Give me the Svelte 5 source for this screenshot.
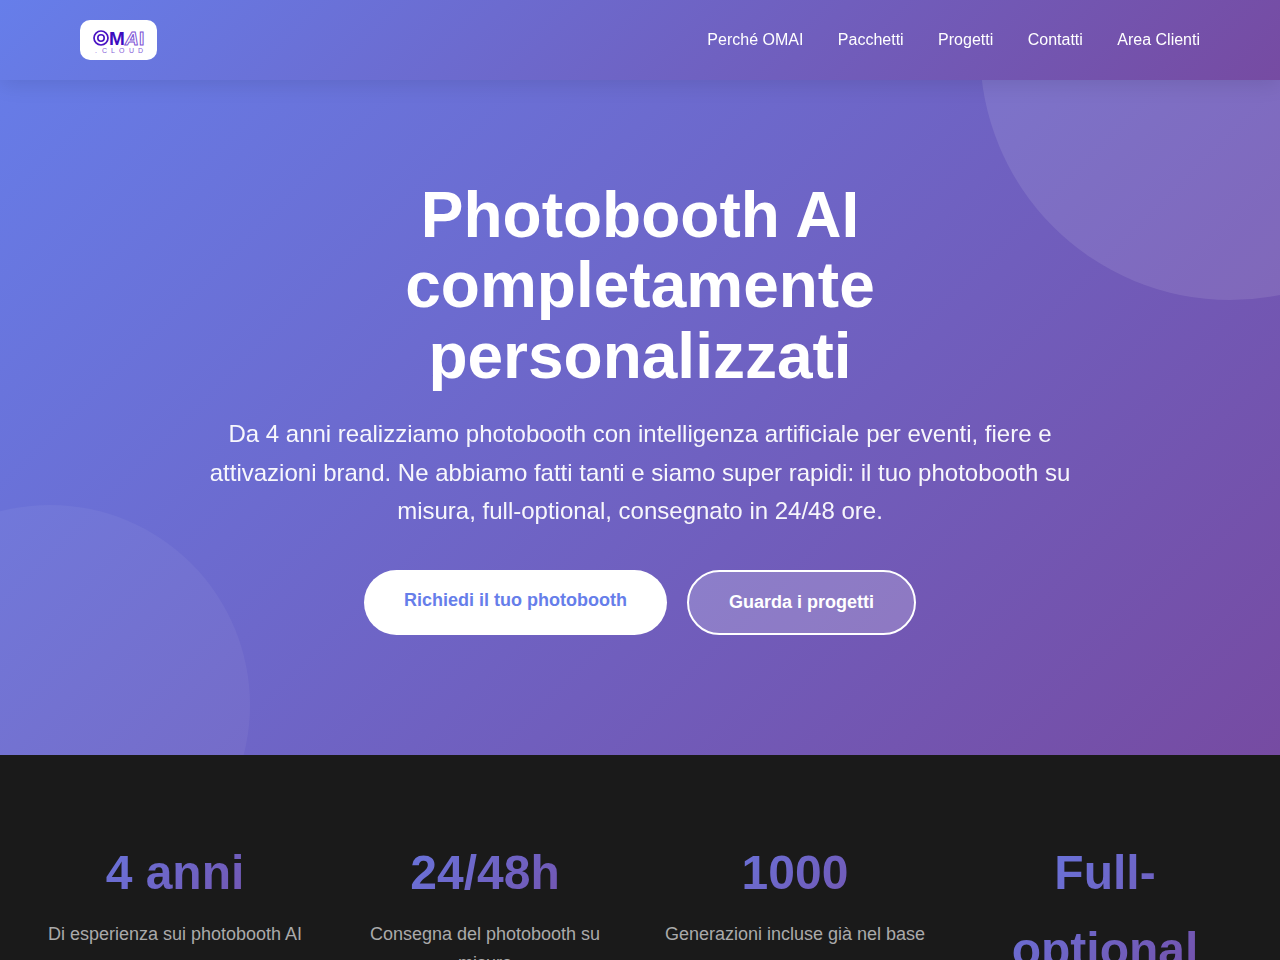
<script>
    const links = [
        { label: "Perché OMAI", href: "#perche" },
        { label: "Pacchetti", href: "#pacchetti" },
        { label: "Progetti", href: "#progetti" },
        { label: "Contatti", href: "#contatti" },
        { label: "Area Clienti", href: "#area-clienti" },
    ];

    const stats = [
        { value: "4 anni", label: "Di esperienza sui photobooth AI" },
        { value: "24/48h", label: "Consegna del photobooth su misura" },
        { value: "1000", label: "Generazioni incluse già nel base" },
        { value: "Full-optional", label: "" },
    ];
</script>

<header>
    <div class="header-inner">
        <a class="logo" href="#home" aria-label="OMAI.CLOUD">
            <svg viewBox="0 0 54 26" width="54" height="26" aria-hidden="true">
                <g fill="none" stroke="#4a12c4">
                    <circle cx="10" cy="11" r="7" stroke-width="1.7" />
                    <circle cx="10" cy="11" r="3.2" stroke-width="1.6" />
                </g>
                <text class="logo-solid" x="18" y="18">M</text>
                <text class="logo-outline slanted" x="34" y="18">A</text>
                <text class="logo-outline" x="48" y="18">I</text>
                <text class="logo-sub" x="4 11 20 28 38 47" y="26">.CLOUD</text>
            </svg>
        </a>
        <nav>
            {#each links as link}
                <a href={link.href}>{link.label}</a>{" "}
            {/each}
        </nav>
    </div>
</header>

<main>
    <section class="hero" id="home">
        <div class="hero-content">
            <h1>Photobooth AI completamente personalizzati</h1>
            <p>
                Da 4 anni realizziamo photobooth con intelligenza artificiale per eventi, fiere e
                attivazioni brand. Ne abbiamo fatti tanti e siamo super rapidi: il tuo photobooth
                su misura, full-optional, consegnato in 24/48 ore.
            </p>
            <div class="hero-buttons">
                <a class="btn btn-primary" href="#contatti">Richiedi il tuo photobooth</a>
                <a class="btn btn-secondary" href="#progetti">Guarda i progetti</a>
            </div>
        </div>
    </section>

    <section class="stats">
        <div class="stats-grid">
            {#each stats as stat}
                <div class="stat">
                    <div class="stat-value">{stat.value}</div>
                    {#if stat.label}
                        <div class="stat-label">{stat.label}</div>
                    {/if}
                </div>
            {/each}
        </div>
    </section>
</main>

<style>
    :global(body) {
        margin: 0;
        font-family: "Liberation Sans", Arial, sans-serif;
        line-height: 1.6;
        background: #1a1a1a;
    }

    header,
    main {
        --gradient: linear-gradient(135deg, #667eea 0%, #764ba2 100%);
    }

    header {
        position: fixed;
        top: 0;
        left: 0;
        right: 0;
        z-index: 10;
        background: var(--gradient);
        box-shadow: 0 4px 20px rgba(0, 0, 0, 0.1);
    }

    .header-inner {
        display: flex;
        justify-content: space-between;
        align-items: center;
        box-sizing: border-box;
        max-width: 1200px;
        margin: 0 auto;
        padding: 20px 40px;
    }

    .logo {
        display: flex;
        padding: 7px 12px 7px 11px;
        background: #fff;
        border-radius: 10px;
    }

    .logo-solid,
    .logo-outline {
        font-size: 19px;
        font-weight: 700;
    }

    .logo-solid {
        fill: #3c0cc0;
    }

    .logo-outline {
        fill: none;
        stroke: #7d52d6;
        stroke-width: 1px;
    }

    .slanted {
        font-style: italic;
    }

    .logo-sub {
        fill: #8560d8;
        font-size: 7px;
    }

    nav a {
        margin-left: 30px;
        color: #fff;
        font-size: 16px;
        text-decoration: none;
    }

    nav a:hover {
        opacity: 0.8;
    }

    .hero {
        position: relative;
        overflow: hidden;
        padding: 180px 40px 120px;
        background: var(--gradient);
        color: #fff;
        text-align: center;
    }

    .hero::before,
    .hero::after {
        content: "";
        position: absolute;
        border-radius: 50%;
    }

    .hero::before {
        top: -200px;
        right: -200px;
        width: 500px;
        height: 500px;
        background: rgba(255, 255, 255, 0.1);
    }

    .hero::after {
        bottom: -150px;
        left: -150px;
        width: 400px;
        height: 400px;
        background: rgba(255, 255, 255, 0.05);
    }

    .hero-content {
        position: relative;
        z-index: 1;
        max-width: 900px;
        margin: 0 auto;
    }

    h1 {
        margin: 0 0 24px;
        font-size: 64px;
        font-weight: 700;
        line-height: 1.1;
    }

    .hero p {
        margin: 0 0 40px;
        font-size: 24px;
        opacity: 0.95;
    }

    .hero-buttons {
        display: flex;
        flex-wrap: wrap;
        justify-content: center;
        gap: 20px;
    }

    .btn {
        padding: 16px 40px;
        border-radius: 50px;
        font-size: 18px;
        font-weight: 600;
        text-decoration: none;
    }

    .btn-primary {
        background: #fff;
        color: #667eea;
    }

    .btn-secondary {
        border: 2px solid #fff;
        background: rgba(255, 255, 255, 0.2);
        color: #fff;
    }

    .stats {
        padding: 80px 40px;
        background: #1a1a1a;
    }

    .stats-grid {
        display: grid;
        grid-template-columns: repeat(auto-fit, minmax(250px, 1fr));
        gap: 40px;
        max-width: 1200px;
        margin: 0 auto;
        text-align: center;
    }

    .stat-value {
        margin-bottom: 8px;
        background: var(--gradient);
        background-clip: text;
        -webkit-background-clip: text;
        color: transparent;
        font-size: 48px;
        font-weight: 700;
    }

    .stat-label {
        color: #aaa;
        font-size: 18px;
    }
</style>
